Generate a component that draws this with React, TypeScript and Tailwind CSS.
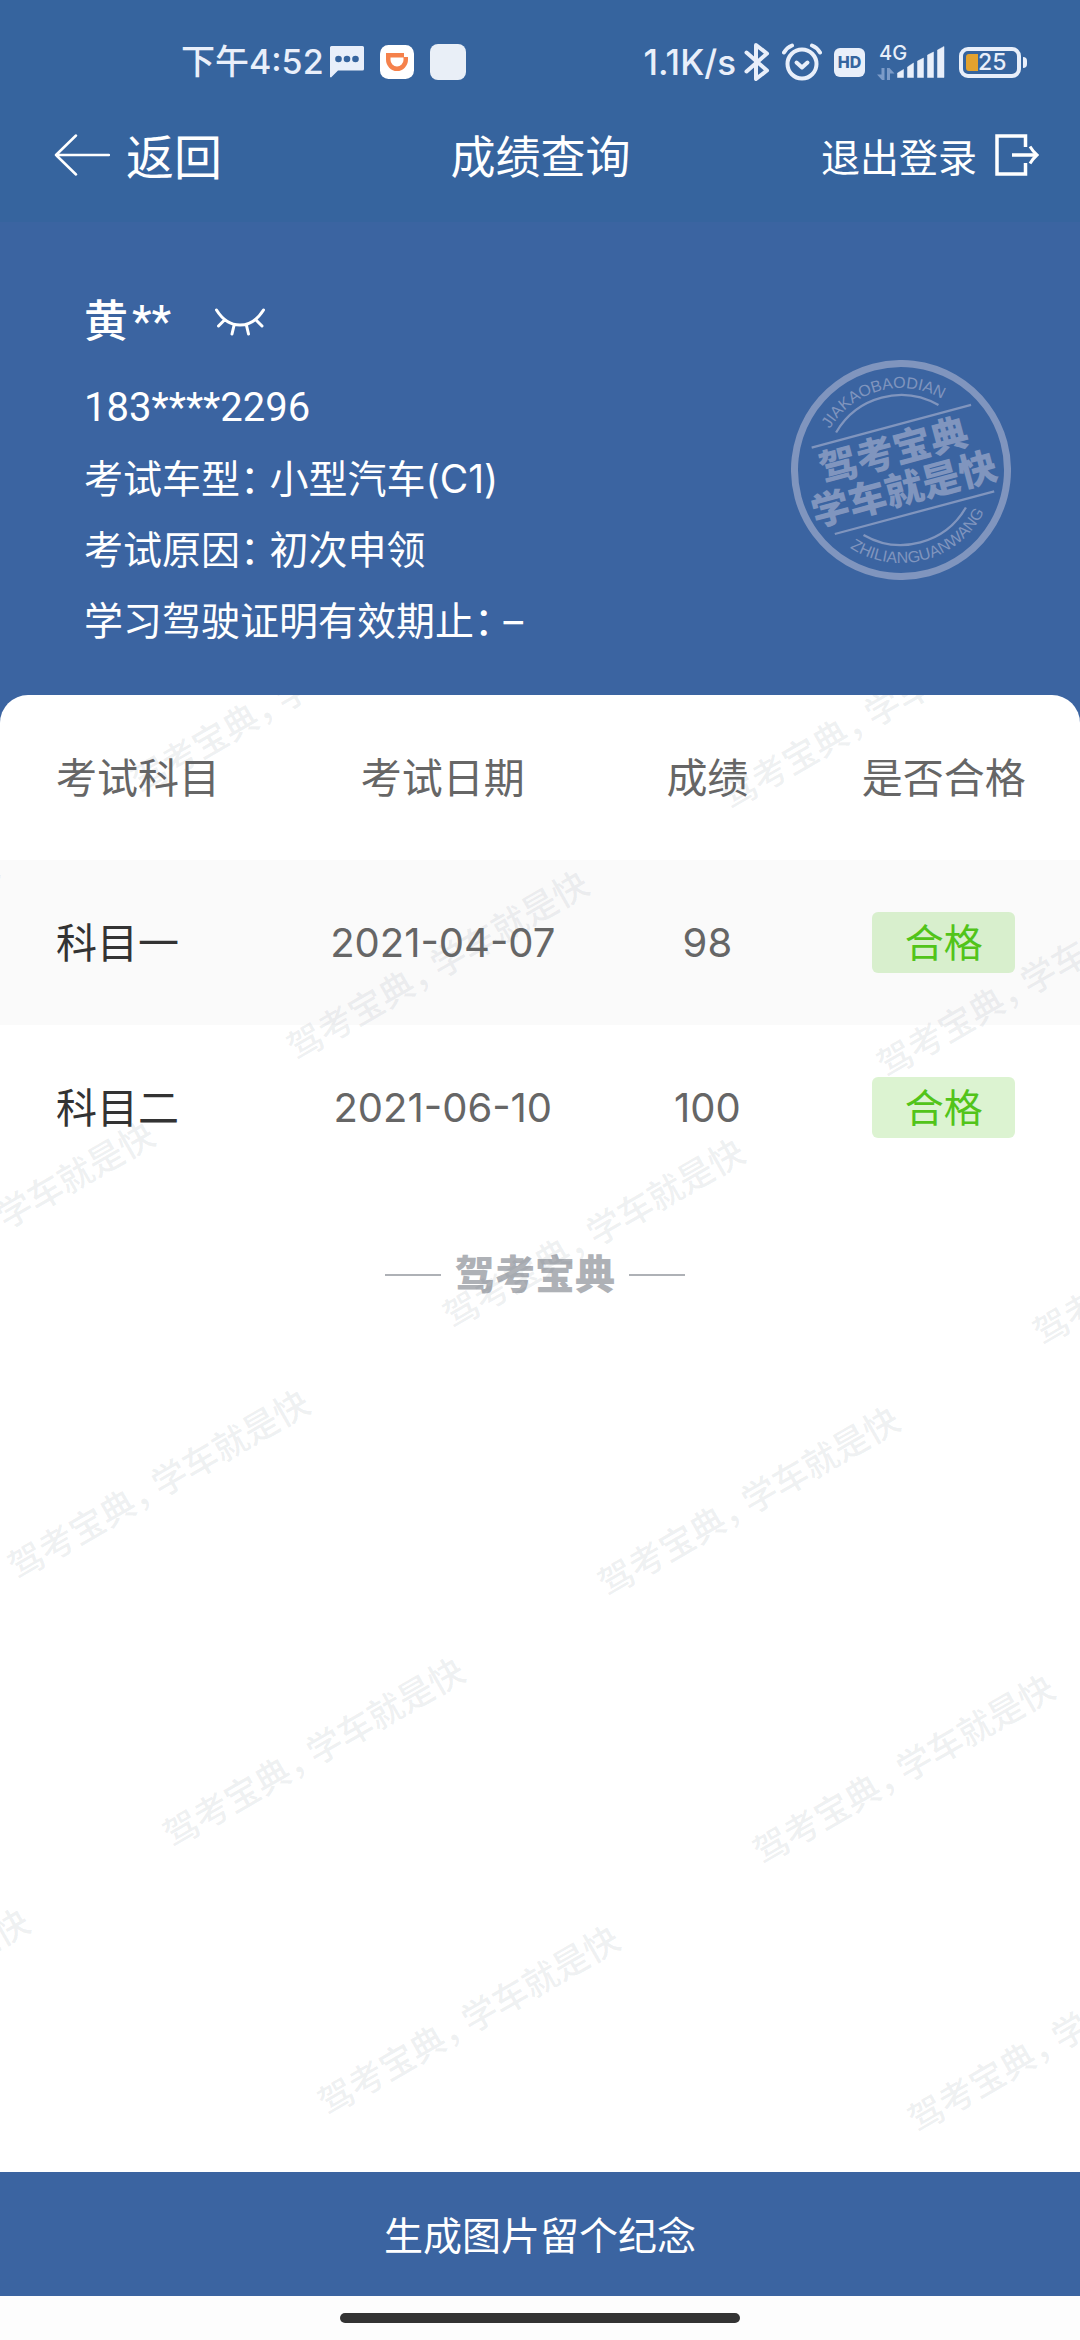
import React from 'react';

const results = [
  { subject: '科目一', date: '2021-04-07', score: '98', status: '合格' },
  { subject: '科目二', date: '2021-06-10', score: '100', status: '合格' },
];

const details = [
  { label: '考试车型：', value: '小型汽车(C1)' },
  { label: '考试原因：', value: '初次申领' },
  { label: '学习驾驶证明有效期止：', value: '–' },
];

const watermarks = [
  [149, 80],
  [739, 96],
  [-285, 330],
  [305, 347],
  [895, 364],
  [-129, 598],
  [461, 615],
  [1051, 632],
  [26, 866],
  [616, 883],
  [181, 1134],
  [771, 1151],
  [-254, 1385],
  [336, 1402],
  [926, 1419],
];

function StatusBar() {
  return (
    <div className="flex h-[88px] items-center justify-between pt-9 pr-[53px] pl-[181px] text-[#e9effa]">
      <div className="flex items-center">
        <span className="text-[34px] leading-[52px] font-medium">下午4:52</span>
        <svg className="ml-1.5" width="34" height="32" viewBox="0 0 34 32" aria-hidden="true">
          <path d="M1.5 0h31A1.5 1.5 0 0 1 34 1.500V23a1.500 1.500 0 0 1-1.500 1.500H8L1 31.500 0 31V1.500A1.500 1.500 0 0 1 1.500 0Z" fill="#e9effa" />
          <circle cx="8.500" cy="13" r="3.300" fill="#36649e" />
          <circle cx="17" cy="13" r="3.300" fill="#36649e" />
          <circle cx="25.500" cy="13" r="3.300" fill="#36649e" />
        </svg>
        <svg className="ml-4" width="34" height="34" viewBox="0 0 34 34" aria-hidden="true">
          <rect width="34" height="34" rx="8.500" fill="#fff" />
          <path d="M6 8H24V12H28V14.500A11 11.500 0 0 1 6 14.500ZM10.500 12.500V15A6.500 6.500 0 0 0 23.500 15V12.500Z" fill="#f5814b" fillRule="evenodd" />
        </svg>
        <span className="ml-4 h-9 w-9 rounded-lg bg-[#e9eff7]" />
      </div>
      <div className="flex items-center">
        <span className="text-[35px] leading-[52px] font-medium">1.1K/s</span>
        <svg className="ml-2" width="26" height="40" viewBox="0 0 26 40" fill="none" stroke="#e9effa" strokeWidth="4" strokeLinecap="round" strokeLinejoin="round" aria-hidden="true">
          <path d="M2.500 10.500 23 28.500 12 37V3L23 11.500 2.500 29.500" />
        </svg>
        <svg className="ml-3" width="40" height="38" viewBox="0 0 40 38" fill="none" stroke="#e9effa" strokeLinecap="round" strokeLinejoin="round" aria-hidden="true">
          <circle cx="20" cy="21" r="14.500" strokeWidth="4" />
          <path d="M14.500 19.500 20 24.500 25.500 19.500" strokeWidth="4" />
          <path d="M2 9.500Q5 4.500 10 2.500M38 9.500Q35 4.500 30 2.500" strokeWidth="4" />
        </svg>
        <span className="ml-3 flex h-[29px] w-[31px] items-center justify-center rounded-md bg-[#e9effa] text-[16px] leading-none font-extrabold text-[#36649e]">HD</span>
        <div className="ml-3 flex h-9 w-[28px] flex-col justify-between">
          <span className="pl-0.5 text-[20px] leading-[18px] font-medium">4G</span>
          <svg width="18" height="12" viewBox="0 0 18 12" fill="#7c9bc8" aria-hidden="true">
            <path d="M4.500 0H7.500V12H5L0 6.500H4.500ZM10 0H12.500L17.500 5.500H13V12H10Z" />
          </svg>
        </div>
        <svg className="-ml-2" width="48" height="32" viewBox="0 0 48 32" fill="#e9effa" aria-hidden="true">
          <path d="M.5 31.500V27L6.500 23.500V31.500ZM10.500 31.500V21L16.500 17V31.500ZM20.500 31.500V15L26.500 12V31.500ZM30.500 31.500V9L36.500 6V31.500ZM40.500 31.500V4L47 .5V31.500Z" stroke="#e9effa" strokeWidth=".5" strokeLinejoin="round" />
        </svg>
        <div className="ml-[14px] flex h-[31px] w-[62px] items-center rounded-[9px] border-4 border-[#e9effa] pl-[3px]">
          <span className="h-[17px] w-3 rounded-l-[3px] bg-[#e3a22e]" />
          <span className="text-[23px] leading-[22px] font-medium">25</span>
        </div>
        <span className="ml-0.5 h-[11px] w-1 rounded-r-md bg-[#e9effa]" />
      </div>
    </div>
  );
}

function NavBar() {
  return (
    <nav className="grid h-[134px] grid-cols-[1fr_auto_1fr] items-center pr-[41px] pl-[54px] text-white">
      <button type="button" className="flex items-center gap-4 justify-self-start text-[48px] leading-[60px]">
        <svg width="56" height="42" viewBox="0 0 56 42" fill="none" stroke="currentColor" strokeWidth="2.500" strokeLinecap="round" strokeLinejoin="round" aria-hidden="true">
          <path d="M55 21H2M22 1.500 2 21 22 40.500" />
        </svg>
        <span className="pt-1.5">返回</span>
      </button>
      <h1 className="pt-1.5 pr-3 text-[45px] leading-[60px]">成绩查询</h1>
      <button type="button" className="flex items-center gap-[18px] justify-self-end text-[39px] leading-[60px]">
        <span className="pt-1.5">退出登录</span>
        <svg width="44" height="42" viewBox="0 0 44 42" fill="none" stroke="currentColor" strokeWidth="3.500" aria-hidden="true">
          <path d="M30.500 13V2H2V40H30.500V29M17 21H42" />
          <path d="M35 12.500Q38 17.500 42 21Q38 24.500 35 29.500" strokeWidth="3" />
        </svg>
      </button>
    </nav>
  );
}

function Stamp() {
  return (
    <svg className="mt-[74px] shrink-0" width="220" height="220" viewBox="0 0 220 220" fill="none" role="img" aria-label="驾考宝典 学车就是快">
      <defs>
        <path id="stamp-top" d="M28 110A82 82 0 0 1 192 110" />
        <path id="stamp-bottom" d="M17 110A93 93 0 0 0 203 110" />
      </defs>
      <g transform="rotate(-15 110 110)">
        <circle cx="110" cy="110" r="106.500" stroke="#8095be" strokeWidth="7" />
        <path d="M29.500 65.300H194.500M29.500 154.700H194.500M57 57A75 75 0 0 1 163 57M57 163A75 75 0 0 0 163 163" stroke="#8095be" strokeWidth="2.300" />
        <g fill="#8095be" textAnchor="middle">
          <text className="text-[16px]" fontFamily="Liberation Sans">
            <textPath href="#stamp-top" startOffset="50%">JIAKAOBAODIAN</textPath>
          </text>
          <text className="text-[16px]" fontFamily="Liberation Sans">
            <textPath href="#stamp-bottom" startOffset="50%">ZHILIANGUANWANG</textPath>
          </text>
          <text className="text-[38px] font-black" x="108" y="103">驾考宝典</text>
          <text className="text-[38px] font-black" x="108" y="143">学车就是快</text>
        </g>
      </g>
    </svg>
  );
}

function Profile() {
  return (
    <section className="flex items-start justify-between bg-[#3b64a1] pt-16 pr-[69px] pb-[39px] pl-[84px] text-white">
      <div className="text-[39px] leading-[71px]">
        <div className="mb-[14px] flex items-center">
          <h2 className="text-[44px] leading-[71px] font-medium">
            黄<span className="pl-1 font-[Roboto]">**</span>
          </h2>
          <button type="button" aria-label="显示完整信息" className="ml-11">
            <svg width="50" height="28" viewBox="0 0 50 28" fill="none" stroke="currentColor" strokeWidth="3" strokeLinecap="round" aria-hidden="true">
              <path d="M1.500 2C14 22 36 22 48.500 2M9.500 12 3.500 18M19 17.500 17 26M31.500 17.500 33.500 26M41 12 47 18" />
            </svg>
          </button>
        </div>
        <p className="font-[Roboto] text-[40px]">183****2296</p>
        <dl>
          {details.map((item) => (
            <div key={item.label} className="flex gap-2.5">
              <dt className="[font-feature-settings:'halt']">{item.label}</dt>
              <dd>{item.value}</dd>
            </div>
          ))}
        </dl>
      </div>
      <Stamp />
    </section>
  );
}

function Watermark() {
  return (
    <svg className="pointer-events-none absolute inset-0 h-full w-full overflow-hidden" aria-hidden="true">
      <g className="text-[35px] font-medium [font-feature-settings:'halt']" fill="#5b6b7b" fillOpacity=".1">
        {watermarks.map(([x, y]) => (
          <text key={`${x}:${y}`} transform={`translate(${x} ${y}) rotate(-30)`} x="-17" y="13">
            驾考宝典，<tspan dx="8">学车就是快</tspan>
          </text>
        ))}
      </g>
    </svg>
  );
}

function Results() {
  return (
    <table className="w-full table-fixed text-center text-[41px] leading-[60px] text-[#666]">
      <colgroup>
        <col className="w-[28%]" />
        <col className="w-[26%]" />
        <col className="w-[23%]" />
        <col className="w-[23%]" />
      </colgroup>
      <thead>
        <tr className="h-[165px]">
          <th scope="col" className="pl-14 text-left font-normal">考试科目</th>
          <th scope="col" className="font-normal">考试日期</th>
          <th scope="col" className="font-normal">成绩</th>
          <th scope="col" className="pr-6 font-normal">是否合格</th>
        </tr>
      </thead>
      <tbody>
        {results.map((row) => (
          <tr key={row.subject} className="h-[165px] odd:bg-[#fafafa]">
            <th scope="row" className="pl-14 text-left font-normal text-[#333]">{row.subject}</th>
            <td className="text-[40px]">{row.date}</td>
            <td className="text-[40px]">{row.score}</td>
            <td className="pr-6">
              <span className="mx-auto block h-[61px] w-[143px] rounded-md bg-[#52c41a]/20 text-[39px] leading-[61px] text-[#52c41a]">{row.status}</span>
            </td>
          </tr>
        ))}
      </tbody>
    </table>
  );
}

export default function App() {
  return (
    <div className="flex min-h-screen flex-col bg-[#3b64a1] font-['Inter','Noto_Sans_CJK_SC',sans-serif]">
      <header className="bg-[#36649e]">
        <StatusBar />
        <NavBar />
      </header>
      <Profile />
      <main className="relative flex-1 overflow-hidden rounded-t-[28px] bg-white">
        <Results />
        <div className="mt-[55px] flex items-center justify-center gap-[14px] pr-2.5">
          <span className="h-0.5 w-14 bg-[#aeb1b6]" />
          <span className="text-[40px] leading-[60px] font-black text-[#aeb1b6]">驾考宝典</span>
          <span className="h-0.5 w-14 bg-[#aeb1b6]" />
        </div>
        <Watermark />
      </main>
      <button type="button" className="h-[124px] w-full bg-[#3b64a1] pt-1 text-[39px] text-white">
        生成图片留个纪念
      </button>
      <div className="flex h-11 justify-center bg-[#fdfdfd] pt-[17px]">
        <span className="h-2.5 w-[37%] rounded-full bg-[#333]" />
      </div>
    </div>
  );
}
